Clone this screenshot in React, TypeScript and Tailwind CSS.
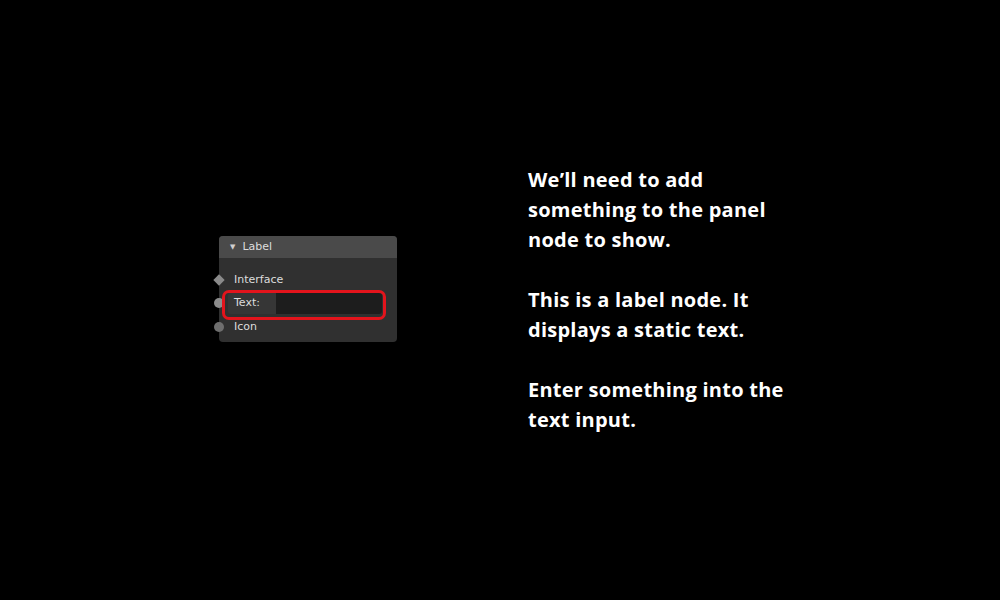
export default function App() {
  return (
    <div className="flex h-[600px] w-[1000px] bg-black">
      <LabelNode />
      <div
        className="ml-[131px] mt-[165px] text-[20px] font-bold leading-[30px] tracking-[0.25px] text-white"
        style={{ fontFamily: "'Open Sans', 'Liberation Sans', sans-serif" }}
      >
        <p>We’ll need to add</p>
        <p>something to the panel</p>
        <p>node to show.</p>
        <p className="mt-[30px]">This is a label node. It</p>
        <p>displays a static text.</p>
        <p className="mt-[30px]">Enter something into the</p>
        <p>text input.</p>
      </div>
    </div>
  )
}

function LabelNode() {
  return (
    <div
      className="relative ml-[219px] mt-[236px] h-[106px] w-[178px] rounded-[4px] bg-[#303030] text-[11px] text-[#dddddd]"
      style={{ fontFamily: "'DejaVu Sans', sans-serif" }}
    >
      <div className="flex h-[22px] items-center rounded-t-[4px] bg-[#4a4a4a] pl-[11px]">
        <span className="text-[7px] text-[#cfcfcf]">▼</span>
        <span className="ml-[7px]">Label</span>
      </div>
      <div className="pt-[11px]">
        <div className="relative flex h-[22px] items-center pl-[15px]">
          <span className="absolute left-[-4px] top-[7px] h-[8px] w-[8px] rotate-45 bg-[#8a8a8a]" />
          Interface
        </div>
        <div className="relative flex h-[24px] items-center">
          <span className="absolute left-[-5px] top-[7px] h-[10px] w-[10px] rounded-full bg-[#8c8c8c]" />
          <div className="ml-[9px] flex h-[21px] w-[48px] items-center rounded-l-[3px] bg-[#363636] pl-[6px]">
            Text:
          </div>
          <div className="h-[21px] w-[106px] rounded-r-[3px] bg-[#1d1d1d]" />
        </div>
        <div className="relative mt-[1px] flex h-[22px] items-center pl-[15px]">
          <span className="absolute left-[-5px] top-[6px] h-[10px] w-[10px] rounded-full bg-[#6e6e6e]" />
          Icon
        </div>
      </div>
      <div className="absolute left-[3px] top-[54px] h-[30px] w-[164px] rounded-[7px] border-[3px] border-[#e3141c]" />
    </div>
  )
}
